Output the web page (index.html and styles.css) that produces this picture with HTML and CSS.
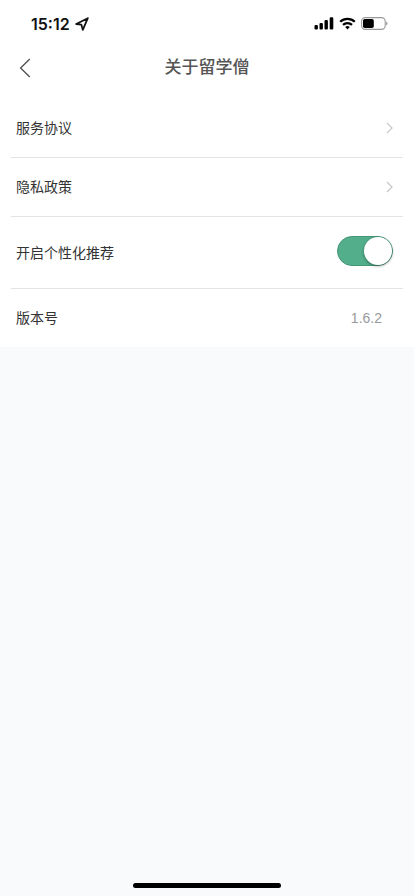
FILE: index.html
```html
<!DOCTYPE html>
<html lang="zh-CN">
<head>
<meta charset="utf-8">
<meta name="viewport" content="width=device-width, initial-scale=1">
<title>关于留学僧</title>
<link rel="stylesheet" href="styles.css">
</head>
<body>
<div class="screen">
  <div class="status">
    <div class="status-time">
      <span>15:12</span>
      <svg width="14" height="14" viewBox="0 0 14 14" fill="none" stroke="#111" stroke-width="1.8" stroke-linejoin="round" aria-hidden="true"><path d="M12.8 1.2 1.2 7l5.1.6 1.5 5.2z"/></svg>
    </div>
    <div class="status-icons">
      <svg width="20" height="13" viewBox="0 0 20 13" fill="#000" aria-hidden="true"><rect x="0.5" y="8" width="3.4" height="4.5" rx="1.1"/><rect x="5.5" y="6" width="3.4" height="6.5" rx="1.1"/><rect x="10.5" y="3" width="3.4" height="9.5" rx="1.1"/><rect x="15.7" y="0.3" width="3.6" height="12.2" rx="1.1"/></svg>
      <svg width="17" height="13" viewBox="0 0 17 13" fill="none" stroke="#000" stroke-width="2.2" aria-hidden="true"><path d="M1.2 4.8a10.4 10.4 0 0 1 14.6 0M4 7.9a6.4 6.4 0 0 1 9 0"/><path d="M8.5 12.4 6.2 10.1a3.3 3.3 0 0 1 4.6 0z" fill="#000" stroke="none"/></svg>
      <svg width="27" height="13" viewBox="0 0 27 13" aria-hidden="true"><rect x="0.6" y="0.6" width="23.6" height="11.8" rx="3.6" fill="none" stroke="#999" stroke-width="1.1"/><rect x="2" y="2" width="10.8" height="9" rx="1.8"/><path d="M25.2 4.5c1.8.8 1.8 3.2 0 4z" fill="#999"/></svg>
    </div>
  </div>
  <header class="nav">
    <button class="back" type="button" aria-label="返回"><svg width="12" height="20" viewBox="0 0 12 20" fill="none" stroke="#555" stroke-width="1.4" aria-hidden="true"><path d="M10.8 1 1.6 10l9.2 9"/></svg></button>
    <h1 class="title">关于留学僧</h1>
  </header>
  <main class="list">
    <a class="row" href="#terms">服务协议<svg class="chevron" width="7" height="12" viewBox="0 0 7 12" aria-hidden="true"><path d="M1 1l5 5-5 5"/></svg></a>
    <a class="row" href="#privacy">隐私政策<svg class="chevron" width="7" height="12" viewBox="0 0 7 12" aria-hidden="true"><path d="M1 1l5 5-5 5"/></svg></a>
    <div class="row row-tall">
      <label for="personal">开启个性化推荐</label>
      <input class="switch" id="personal" type="checkbox" role="switch" checked>
    </div>
    <div class="row"><span>版本号</span><span class="version">1.6.2</span></div>
  </main>
  <div class="home"></div>
</div>
</body>
</html>
```
FILE: styles.css
```css
* {
  box-sizing: border-box;
}

body {
  margin: 0;
  background: #f9fafc;
  color: #333;
  font: 14px/20px "Liberation Sans", "Noto Sans CJK SC", sans-serif;
}

.screen {
  display: flex;
  flex-direction: column;
  min-height: 100vh;
}

.status {
  display: flex;
  align-items: center;
  justify-content: space-between;
  height: 47px;
  padding: 0 26px 0 31px;
  background: #fff;
}

.status-time,
.status-icons {
  display: flex;
  align-items: center;
  gap: 5px;
}

.status-time {
  color: #111;
  font: 600 16px/20px Inter, sans-serif;
}

.nav {
  display: grid;
  grid-template-columns: 50px 1fr 50px;
  align-items: center;
  height: 52px;
  padding-bottom: 10px;
  background: #fff;
}

.back {
  display: flex;
  align-items: center;
  height: 40px;
  padding: 0 19px;
  border: 0;
  background: none;
}

.title {
  margin: 0;
  color: #555;
  font-size: 17px;
  font-weight: 500;
  line-height: 26px;
  text-align: center;
}

.list {
  padding: 0 11px;
  background: #fff;
}

.row {
  display: flex;
  align-items: center;
  justify-content: space-between;
  min-height: 59px;
  padding: 0 10px 0 5px;
  border-bottom: 1px solid #e3e3e3;
  color: inherit;
  text-decoration: none;
}

.row:last-child {
  min-height: 58px;
  padding-right: 21px;
  border-bottom: 0;
}

.row-tall {
  min-height: 72px;
}

.chevron {
  fill: none;
  stroke: #c8c8c8;
  stroke-width: 1.2;
}

.switch {
  appearance: none;
  width: 56px;
  height: 30px;
  margin: 0 0 4px;
  border: 1px solid #469678;
  border-radius: 15px;
  background: #52ae8b;
}

.switch::before {
  content: "";
  display: block;
  width: 28px;
  height: 28px;
  border-radius: 50%;
  background: #fff;
  box-shadow: 0 1px 3px rgba(0, 0, 0, 0.4);
}

.switch:checked::before {
  margin-left: auto;
}

.version {
  color: #999;
}

.home {
  width: 148px;
  height: 5px;
  margin: auto auto 8px;
  border-radius: 3px;
  background: #000;
}
```
